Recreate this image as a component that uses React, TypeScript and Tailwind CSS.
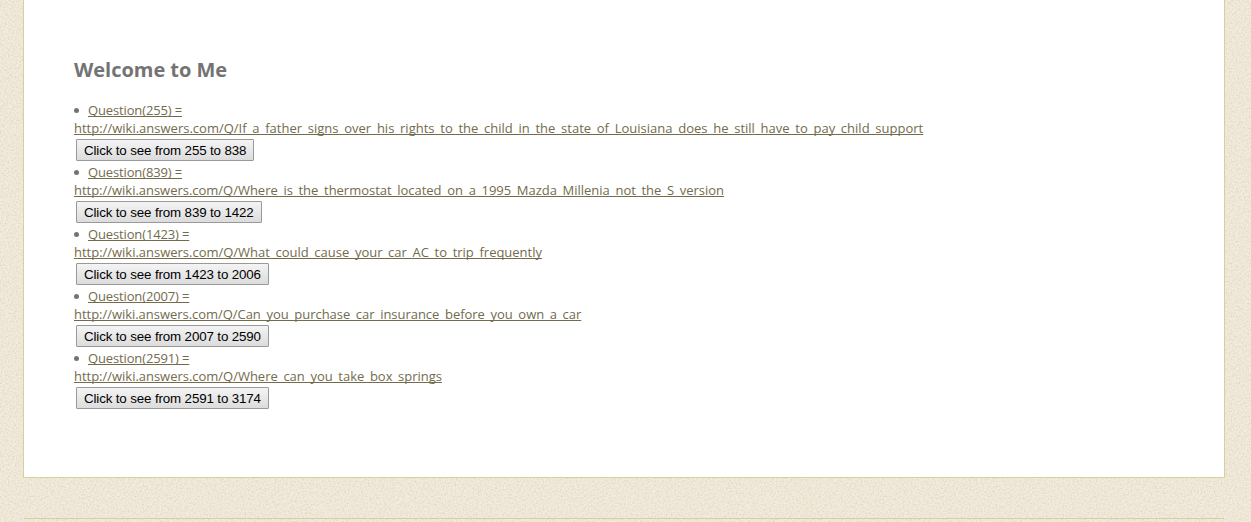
const questions = [
  {
    from: 255,
    to: 838,
    url: "http://wiki.answers.com/Q/If_a_father_signs_over_his_rights_to_the_child_in_the_state_of_Louisiana_does_he_still_have_to_pay_child_support",
    tracking: "tracking-[0.006px]",
  },
  {
    from: 839,
    to: 1422,
    url: "http://wiki.answers.com/Q/Where_is_the_thermostat_located_on_a_1995_Mazda_Millenia_not_the_S_version",
    tracking: "tracking-[-0.02px]",
  },
  {
    from: 1423,
    to: 2006,
    url: "http://wiki.answers.com/Q/What_could_cause_your_car_AC_to_trip_frequently",
    tracking: "tracking-[-0.015px]",
  },
  {
    from: 2007,
    to: 2590,
    url: "http://wiki.answers.com/Q/Can_you_purchase_car_insurance_before_you_own_a_car",
    tracking: "tracking-[-0.035px]",
  },
  {
    from: 2591,
    to: 3174,
    url: "http://wiki.answers.com/Q/Where_can_you_take_box_springs",
    tracking: "tracking-[-0.02px]",
  },
];

function PaperTexture() {
  return (
    <svg className="absolute inset-0 h-full w-full" aria-hidden="true">
      <filter id="paper" colorInterpolationFilters="sRGB">
        <feTurbulence
          type="fractalNoise"
          baseFrequency="0.6"
          numOctaves="3"
          stitchTiles="stitch"
        />
        <feColorMatrix values="0 0 0 0 0.6  0 0 0 0 0.56  0 0 0 0 0.47  0.45 0 0 0 -0.17" />
      </filter>
      <rect width="100%" height="100%" filter="url(#paper)" />
    </svg>
  );
}

export default function App() {
  return (
    <div className="relative h-[522px] overflow-hidden bg-[#f3ecdc] px-[23px] font-['Open_Sans',sans-serif] text-[#737373]">
      <PaperTexture />
      <main className="relative mr-[3px] h-[478px] border-x border-b border-[#d6d19c] bg-white px-[50px] pt-[56px]">
        <h1 className="text-[20px] leading-[28px] font-bold tracking-[-0.03px]">
          Welcome to Me
        </h1>
        <ul className="mt-[17px] text-[13px] leading-[18px]">
          {questions.map((question) => (
            <li key={question.from} className="h-[62px]">
              <div className="flex items-center">
                <span className="mr-[9px] size-[5px] rounded-full bg-[#737373]" />
                <a className="tracking-[-0.14px] text-[#736b4c] underline [text-decoration-skip-ink:none]">
                  Question({question.from}) =
                </a>
              </div>
              <a
                className={`block whitespace-nowrap text-[#736b4c] underline [text-decoration-skip-ink:none] ${question.tracking}`}
              >
                {question.url}
              </a>
              <button className="mx-[2px] mt-[2px] block h-[22px] rounded-[1px] border border-[#999] bg-linear-to-b from-[#f4f4f4] to-[#dcdcdc] px-[7px] pt-px font-['Liberation_Sans',sans-serif] text-[13.333px] leading-[19px] tracking-[-0.13px] whitespace-nowrap text-black">
                Click to see from {question.from} to {question.to}
              </button>
            </li>
          ))}
        </ul>
      </main>
      <hr className="relative mt-[40px] mr-[4px] ml-px border-[#d6d19c]" />
    </div>
  );
}
